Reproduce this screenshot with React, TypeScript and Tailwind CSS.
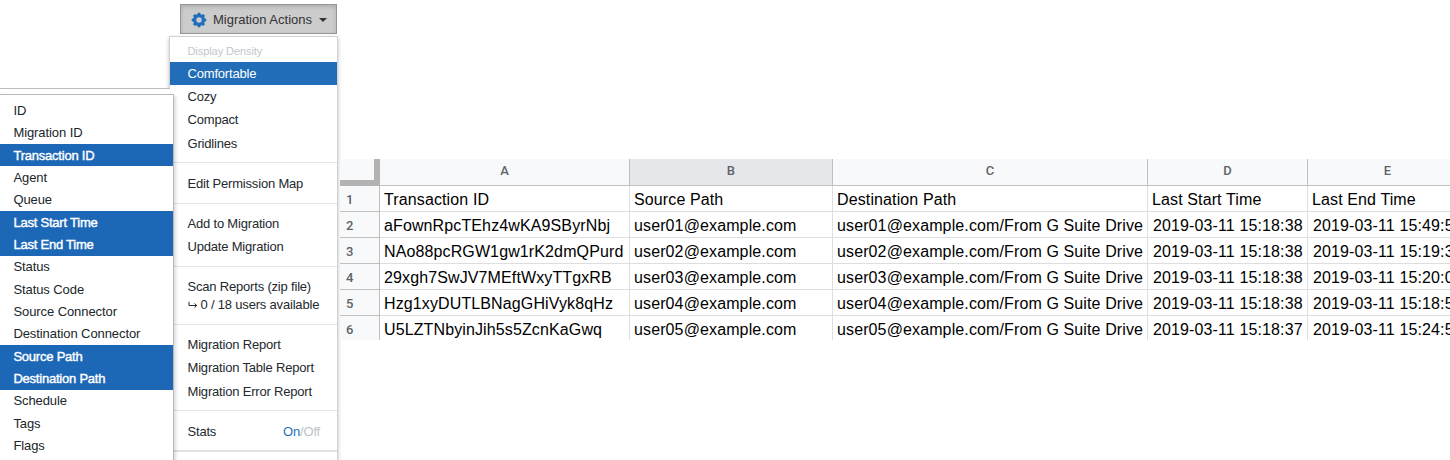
import React from "react";
import clsx from "clsx";

const columns = [
  { name: "ID" },
  { name: "Migration ID" },
  { name: "Transaction ID", selected: true },
  { name: "Agent" },
  { name: "Queue" },
  { name: "Last Start Time", selected: true },
  { name: "Last End Time", selected: true },
  { name: "Status" },
  { name: "Status Code" },
  { name: "Source Connector" },
  { name: "Destination Connector" },
  { name: "Source Path", selected: true },
  { name: "Destination Path", selected: true },
  { name: "Schedule" },
  { name: "Tags" },
  { name: "Flags" },
];

const sheetColumns = [
  { letter: "A", width: "w-[250px]" },
  { letter: "B", width: "w-[203px]", active: true },
  { letter: "C", width: "w-[315px]" },
  { letter: "D", width: "w-[160px]" },
  { letter: "E", width: "w-[160px]" },
];

const sheetRows = [
  ["Transaction ID", "Source Path", "Destination Path", "Last Start Time", "Last End Time"],
  ["aFownRpcTEhz4wKA9SByrNbj", "user01@example.com", "user01@example.com/From G Suite Drive", "2019-03-11 15:18:38", "2019-03-11 15:49:5"],
  ["NAo88pcRGW1gw1rK2dmQPurd", "user02@example.com", "user02@example.com/From G Suite Drive", "2019-03-11 15:18:38", "2019-03-11 15:19:3"],
  ["29xgh7SwJV7MEftWxyTTgxRB", "user03@example.com", "user03@example.com/From G Suite Drive", "2019-03-11 15:18:38", "2019-03-11 15:20:0"],
  ["Hzg1xyDUTLBNagGHiVyk8qHz", "user04@example.com", "user04@example.com/From G Suite Drive", "2019-03-11 15:18:38", "2019-03-11 15:18:5"],
  ["U5LZTNbyinJih5s5ZcnKaGwq", "user05@example.com", "user05@example.com/From G Suite Drive", "2019-03-11 15:18:37", "2019-03-11 15:24:5"],
];

function Gear() {
  return (
    <svg viewBox="-8 -8 16 16" className="mt-px h-4 w-4 shrink-0 text-[#1f6dbb]" fill="none" stroke="currentColor">
      <circle r="4.3" strokeWidth="3.2" />
      {[0, 45, 90, 135, 180, 225, 270, 315].map((angle) => (
        <path key={angle} d="M-1.4 -5L-0.9 -6.9H0.9L1.4 -5Z" fill="currentColor" strokeWidth="0.8" transform={`rotate(${angle})`} strokeLinejoin="round" />
      ))}
    </svg>
  );
}

function ReturnArrow() {
  return (
    <svg viewBox="0 0 10 8" className="mr-[3px] mb-px inline-block h-2 w-[10px]" fill="none" stroke="currentColor" strokeWidth="1">
      <path d="M1 0.8V4.5H8.6M6.5 2.5L8.8 4.5L6.5 6.5" />
    </svg>
  );
}

function MenuItem({ children, selected }: { children: React.ReactNode; selected?: boolean }) {
  return (
    <li
      className={clsx(
        "flex h-[23.1px] items-center pt-px pl-[17.5px] whitespace-nowrap",
        selected ? "bg-[#216db8] text-white" : "text-[#23292d]"
      )}
    >
      {children}
    </li>
  );
}

function Divider() {
  return <li className="my-[8px] h-[1.1px] bg-[#e3e3e3]" />;
}

function ActionsMenu() {
  return (
    <ul className="-mt-px h-[440px] w-[169px] shrink-0 border border-[#d2d2d2] bg-white pt-[1.9px] text-[13px] tracking-[-0.19px] shadow-[0_2px_4px_rgba(0,0,0,0.25)]">
      <li className="flex h-[23.1px] items-center pt-[2px] pl-[17.5px] text-[11px] tracking-[-0.07px] text-[#c0c7cb]">Display Density</li>
      <MenuItem selected>Comfortable</MenuItem>
      <MenuItem>Cozy</MenuItem>
      <MenuItem>Compact</MenuItem>
      <MenuItem>Gridlines</MenuItem>
      <Divider />
      <MenuItem>Edit Permission Map</MenuItem>
      <Divider />
      <MenuItem>Add to Migration</MenuItem>
      <MenuItem>Update Migration</MenuItem>
      <Divider />
      <li className="h-[41px] pt-[3.3px] pl-[17.5px] leading-[18px] whitespace-nowrap text-[#23292d]">
        <div>Scan Reports (zip file)</div>
        <div>
          <ReturnArrow />0 / 18 users available
        </div>
      </li>
      <Divider />
      <MenuItem>Migration Report</MenuItem>
      <MenuItem>Migration Table Report</MenuItem>
      <MenuItem>Migration Error Report</MenuItem>
      <Divider />
      <MenuItem>
        <span className="flex-1">Stats</span>
        <span className="pr-[17px] text-[#bcc3c8]">
          <span className="text-[#1f72bd]">On</span>/Off
        </span>
      </MenuItem>
      <Divider />
    </ul>
  );
}

function ColumnPicker() {
  return (
    <div className="absolute top-[88px] left-0 h-[380px] w-[174px]">
      <div className="h-[6px] w-[170px] border-t border-[#bdbdbd] bg-white" />
      <ul className="h-[380px] border-t border-r border-[#b9b9b9] bg-white pt-[4.3px] text-[13px] tracking-[-0.08px] text-[#20262a] shadow-[2px_2px_3px_rgba(0,0,0,0.14)]">
        {columns.map((column) => (
          <li
            key={column.name}
            className={clsx(
              "flex h-[22.35px] items-center pt-[0.6px] pl-[13.4px] whitespace-nowrap",
              column.selected && "bg-[#1d67b7] tracking-[-0.22px] text-white [-webkit-text-stroke:0.4px_white]"
            )}
          >
            {column.name}
          </li>
        ))}
      </ul>
    </div>
  );
}

function Sheet() {
  return (
    <section className="mt-[159px] ml-[3px] h-[181px] w-[1110px] shrink-0 overflow-hidden text-[16px] tracking-[0.12px] text-black">
      <div className="flex h-[27px] w-[1130px]">
        <div className="w-10 border-r-[6px] border-b-[6px] border-[#b3b3b3] bg-[#f8f9fa]" />
        {sheetColumns.map((column) => (
          <div
            key={column.letter}
            className={clsx(
              "flex items-center justify-center border-r border-b border-[#c0c0c0] pb-[3px] font-[Roboto] text-[13px] font-medium text-[#5f6368]",
              column.width,
              column.active ? "bg-[#e6e7eb]" : "bg-[#f8f9fa]"
            )}
          >
            {column.letter}
          </div>
        ))}
      </div>
      {sheetRows.map((row, rowIndex) => (
        <div key={row[0]} className="flex h-[26px] w-[1130px]">
          <div className="flex w-10 items-center border-r border-b border-[#c0c0c0] bg-[#f8f9fa] pt-[2px] pl-[6px] font-[Roboto] text-[13px] font-medium text-[#5f6368]">
            {rowIndex + 1}
          </div>
          {row.map((cell, i) => (
            <div
              key={i}
              className={clsx(
                "flex items-center overflow-hidden border-r border-b border-[#dedede] pt-[2px] whitespace-nowrap",
                sheetColumns[i].width,
                i > 2 && rowIndex > 0 ? "pl-[5px]" : "pl-[4px]"
              )}
            >
              {cell}
            </div>
          ))}
        </div>
      ))}
    </section>
  );
}

export default function App() {
  return (
    <main className="relative flex h-[460px] w-[1450px] overflow-hidden bg-white font-['Liberation_Sans',Arial,sans-serif]">
      <div className="ml-[169px] flex w-[168px] shrink-0 flex-col pt-[4px]">
        <button className="mb-[3px] ml-[11px] flex h-[30px] w-[157px] shrink-0 items-center border border-[#959595] bg-[#cccccc] pl-[10px] text-[13px] whitespace-nowrap text-[#333] shadow-[inset_0_2px_4px_rgba(0,0,0,0.15)]">
          <Gear />
          <span className="mt-px ml-[6px]">Migration Actions</span>
          <span className="mt-px ml-[7px] border-x-[4px] border-t-[4px] border-x-transparent border-t-[#333]" />
        </button>
        <ActionsMenu />
      </div>
      <Sheet />
      <ColumnPicker />
    </main>
  );
}
